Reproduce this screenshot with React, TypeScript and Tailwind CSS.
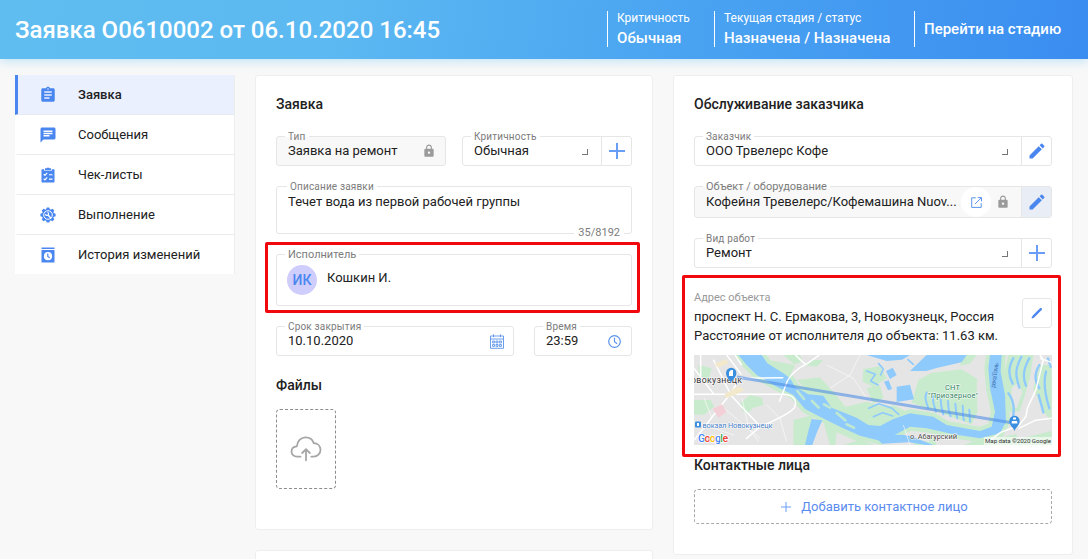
import type { ReactNode } from "react";
import { MdAssignment, MdChat, MdEdit, MdLock } from "react-icons/md";

const ChecklistIcon = () => (
  <svg width="16" height="16" viewBox="0 0 16 16" fill="none">
    <path fill="#4a86f0" d="M2 2.2h2.2v1.6h7.6V2.2H14c.3 0 .5.2.5.5v12.1c0 .4-.3.7-.7.7H2.200c-.4 0-.7-.3-.7-.7V2.700c0-.3.200-.5.5-.5z" />
    <path fill="#4a86f0" d="M5 1.200h1.800a1.300 1.300 0 0 1 2.400 0H11v2H5z" />
    <path stroke="#fff" strokeWidth="1.100" d="M3.700 7.200l1.200 1.200 2.300-2.500M3.700 11.700l1.200 1.200 2.300-2.500M9 7.700h3.500M9 12.100h3.500" />
  </svg>
);

const GearIcon = () => (
  <svg width="16" height="16" viewBox="0 0 16 16" fill="none">
    <g fill="#4a86f0">
      <circle cx="8" cy="8" r="6" />
      <path d="M6.700.4h2.600l.9 3H5.800zM6.700 15.600h2.600l.9-3H5.800zM.4 6.700v2.600l3 .9V5.800zM15.600 6.700v2.600l-3 .9V5.800z" />
      <path d="M6.700.4h2.600l.9 3H5.800zM6.700 15.600h2.600l.9-3H5.800zM.4 6.700v2.600l3 .9V5.800zM15.600 6.700v2.600l-3 .9V5.800z" transform="rotate(45 8 8)" />
    </g>
    <circle cx="8" cy="8" r="4.300" stroke="#fff" strokeWidth="1" />
    <path stroke="#fff" strokeWidth="1.500" d="M7.800 7.800l3.400 3.600" />
    <path stroke="#fff" strokeWidth="1.100" d="M5.300 7.200c.5 1.300 2 1.600 2.800.8.800-.8.500-2.200-.6-2.700" />
  </svg>
);

const HistoryIcon = () => (
  <svg width="16" height="16" viewBox="0 0 16 16" fill="none">
    <path fill="#4a86f0" d="M1.500.5h13v1.600h-13zM1.500 2.900h13v12c0 .400-.300.700-.700.700H2.200a.700.700 0 0 1-.700-.700z" />
    <circle cx="8" cy="9.200" r="4.100" fill="#fff" />
    <path stroke="#4a86f0" strokeWidth="1.200" d="M7.800 6.500v3l1.900 1.300" />
  </svg>
);

const PlusIcon = ({ size = 16, weight = 2 }: { size?: number; weight?: number }) => (
  <svg width={size} height={size} viewBox="0 0 16 16" stroke="#6a9df6" strokeWidth={weight}>
    <path d="M8 0v16M0 8h16" />
  </svg>
);

const Corner = () => (
  <span className="mt-0.5 block h-[6px] w-[6px] border-r-[1.500px] border-b-[1.500px] border-[#757575]" />
);

const CalendarIcon = () => (
  <svg width="14" height="15" viewBox="0 0 14 15" fill="none" stroke="#5b94ea" strokeWidth=".9">
    <path d="M.5 2h13v12.300H.5zM.5 5h13M3.500.3v2.900M10.500.3v2.900" />
    <path d="M2.600 7h2v1.900h-2zM6 7h2v1.900H6zM9.400 7h2v1.900h-2zM2.600 10.500h2v1.900h-2zM6 10.500h2v1.900H6zM9.400 10.500h2v1.900h-2z" />
  </svg>
);

const ClockIcon = () => (
  <svg width="13" height="13" viewBox="0 0 13 13" fill="none" stroke="#5b94ea" strokeWidth="1.200">
    <circle cx="6.500" cy="6.500" r="5.800" />
    <path d="M6.500 2.800v3.900l2.600 2" />
  </svg>
);

const OpenIcon = () => (
  <svg width="11" height="11" viewBox="0 0 11 11" fill="none" stroke="#5b94ea" strokeWidth="1">
    <path d="M4.800.8H.7v9.600h9.500V6.200M6.700.6h3.800v3.800M10.300.8L4 7" />
  </svg>
);

const PencilStroke = () => (
  <svg width="12" height="12" viewBox="0 0 12 12" fill="none" stroke="#4a86f0" strokeLinecap="round">
    <path strokeWidth="2.400" d="M2.600 9.300L8.300 3.700" />
    <path strokeWidth="2.400" d="M9.300 2.700l.5-.5" />
    <path strokeWidth="1.400" d="M1.300 10.700l1.200-.8" />
  </svg>
);

const CloudIcon = () => (
  <svg width="32" height="26" viewBox="0 0 32 26" fill="none" stroke="#a6a6a6" strokeWidth="1.800" strokeLinecap="round" strokeLinejoin="round">
    <path d="M10.500 20.700H7C3.800 20.700 1.500 18.300 1.500 15.500c0-2.600 2-4.900 5.400-5.200C7.100 5 11 1.400 15.600 1.400c4 0 7 2.300 8 5.600 4 .2 6.900 3 6.900 6.700 0 4-3 7-7 7h-2.200" />
    <path d="M16 24.300V13.500M12.200 17l3.800-3.800 3.800 3.800" />
  </svg>
);

const menu: { label: string; icon: ReactNode }[] = [
  { label: "Заявка", icon: <MdAssignment size={18} color="#4a86f0" /> },
  { label: "Сообщения", icon: <MdChat size={18} color="#4a86f0" /> },
  { label: "Чек-листы", icon: <ChecklistIcon /> },
  { label: "Выполнение", icon: <GearIcon /> },
  { label: "История изменений", icon: <HistoryIcon /> },
];

function Field({
  label,
  labelClass = "left-[8px] text-[10px] tracking-[0.18px]",
  className = "",
  children,
}: {
  label: string;
  labelClass?: string;
  className?: string;
  children: ReactNode;
}) {
  return (
    <div className={`relative flex rounded-[3px] border border-[#e6e6e6] ${className}`}>
      <span
        className={`absolute -top-[7px] bg-[linear-gradient(#fff_55%,transparent_55%)] px-[3px] leading-[13px] whitespace-nowrap text-[#7c7c7c] ${labelClass}`}
      >
        {label}
      </span>
      {children}
    </div>
  );
}

function SideButton({ children, className = "" }: { children: ReactNode; className?: string }) {
  return (
    <div className={`flex w-[30px] shrink-0 items-center justify-center border-l border-[#e6e6e6] ${className}`}>
      {children}
    </div>
  );
}

const RIVER =
  "M175 30H245L262 55 310 85 330 100 345 125 385 148 430 152 455 188 530 218 565 240 600 243 640 222 690 205 760 215 800 240 900 258 935 245 945 200 930 130 925 70 930 30H965L962 80 975 150 978 230 960 265 900 280 820 268 740 250 690 245 640 272 600 287 540 272 480 245 420 215 375 192 340 150 290 125 230 90 200 60Z";

const Terrain = () => (
  <g transform="scale(.33333) translate(-42 -30)">
    <g fill="#c9ebcd">
      <path d={RIVER} stroke="#c9ebcd" strokeWidth="24" strokeLinejoin="round" />
      <path d="M265 45l80 15-14 32-34 0zM310 30h50l8 20-26 8zM350 105l70-8 50 55 30 38-50 10zM42 165l50 0 10 20-30 24-30 0zM55 60l40 10-8 30-32-6zM180 175l30-25 36 8 4 22-30 8-20 20-14-14z" />
      <path d="M550 72l50-8 20 36-40 26-32-16zM560 130l40-10 10 40-30 16zM480 190l80-20 70 20-20 40-60 0z" />
      <path d="M715 105l40-22 90-10 46 28 10 82-26 55-110-40-70-25zM580 200l60-20 60 30-60 20z" />
      <path d="M985 30h75l-10 70-30 98-30 4-26-80zM1080 60h35v170l-25-30-30-70z" />
      <path d="M340 225l60-15-10 90-50 0zM430 230l60 30 90 40H450zM720 275l180 15 215-45v55H700zM850 30l40 0-20 26-30 6zM370 60l30-15 30 0-20 20z" />
    </g>
    <path fill="#e6e5e5" d="M890 110l22 30 6 60-16 32-10-40zM995 130l20-18 12 30-16 46-16 0zM760 275l120 14-30 11h-80zM700 262l40 8 10 22-40-8zM470 262l60 26-40 12h-24zM1000 250l60-30 55 20v18l-100 24z" />
    <g fill="#8fcafd">
      <path d={RIVER} />
      <path d="M395 222l32 4-16 36-14 38h-22l10-42zM650 125l40-6 12 44-52 8zM690 78l50-48h120l-15 22-72 16-34 10zM560 30h130l-24 14-46 4zM618 78l20-10 12 22-20 12zM612 110l14-4 10 26-12 4z" />
      <path d="M590 280c50-14 90-16 130 4l40 16h-22l-52-8-80 4z" />
    </g>
    <g fill="none" stroke="#8fcafd" strokeWidth="7" strokeLinecap="round" strokeLinejoin="round">
      <path d="M745 190c-8-25-12-30-5-48M768 200c-6-20-12-30-8-46M790 208c-8-24-8-30-8-46M812 214c-10-24-6-30-8-46M832 220c-6-20-4-34-6-44M852 226c-6-20-2-34-4-44M870 230l-2-36" strokeWidth="6" />
      <path d="M1000 40c-16 26-16 50-2 76M1024 36c-22 40-16 60-6 92M1048 40c-18 30-22 54-10 82M1078 60c-18 30-12 50 0 70M1098 80c-8 30-6 60 10 110M1076 150l14 52M985 145c16 20 20 40 14 72M1104 40l8 26" />
      <path d="M560 78l26 10-14 20 22 12M596 56l14 16-8 18M566 190l30-14 40 14 20 18M580 215l28-12 30 10M546 250l-8-14M700 58l-16-14" strokeWidth="5" />
    </g>
    <path d="M470 204l26 22M396 168l20 20M432 178l18 10M500 238l22 10M352 138l20 24" stroke="#bfe8d2" strokeWidth="8" strokeLinecap="round" />
    <g fill="none" stroke="#fff" strokeWidth="4.500" strokeLinejoin="round">
      <path d="M42 148H312c30 2 42 20 30 42-24 26-74 40-108 60l-36 32M150 148l90 96M42 286l108-138M150 148L180 100 310 98M140 30l44 58M100 44l50 100M312 134l10-26c12-22 30-38 60-52l36-26M376 58l-30-28M42 70l60 78M62 30v80M165 30l20 30M312 134l-14 36" />
      <path d="M72 160l24 60M186 160l20 90 30 40M120 180l120 100M42 230l120 40M260 180l40 40 20 70M440 60l80 40 40 60M540 30l-30 60-60 40M690 300l-20-60" strokeWidth="2" opacity=".85" />
      <path d="M1080 30l10 14-22 90-26 56-4 24-22 28-54 20-40 30M1080 40l34 12M1016 250l50-24 50-6" />
    </g>
    <path fill="#f2e9cc" d="M104 56l34-14 8 12-32 14zM134 148l40-24 20 10-24 14-34 12z" />
    <path fill="#f3d0d8" d="M98 192l28-14 14 22-24 18z" />
  </g>
);

const RouteMap = () => (
  <svg className="block" width="358" height="90" viewBox="0 0 358 90" fontFamily="Roboto, sans-serif">
    <rect width="358" height="90" fill="#e6e5e5" />
    <Terrain />
    <path d="M43 22L319 68" stroke="#4e8ee6" strokeOpacity=".6" strokeWidth="3" />
    <g stroke="#fff" strokeWidth="1.200" strokeOpacity=".8" paintOrder="stroke">
      <text x="-3" y="28" fontSize="8.800" fill="#333" textLength="51">овокузнецк</text>
      <text x="8.500" y="72.500" fontSize="7.500" fill="#4480c8" textLength="70">вокзал Новокузнецк</text>
      <text x="251" y="34.500" fontSize="7.500" fill="#2f8062" textLength="15">СНТ</text>
      <text x="234" y="43" fontSize="7.500" fill="#2f8062" textLength="50">"Приозерное"</text>
      <text x="216" y="84" fontSize="7.500" fill="#444" textLength="47">о. Абагурский</text>
    </g>
    <g fill="#3b8fe0">
      <path d="M37 28c-1-4-5-5-5-10a5.200 5.200 0 0 1 10.400 0c0 5-4.400 6-5.400 10z" />
      <path d="M320.500 76c-1-4-5.200-5-5.200-10a5.200 5.200 0 0 1 10.400 0C325.700 71 321.500 72 320.500 76z" />
      <rect x="1" y="66.500" width="6" height="6" rx="1" />
    </g>
    <path fill="#fff" d="M35 17l2-2h2v6h-4zM319 62.500h3v2h-3zM318 66h5l.5 2.500h-6zM3 68h2v3H3z" />
    <text x="301" y="33" fontSize="6.500" fill="#3f78b5" textLength="25" transform="rotate(-82 301 33)">река Томь</text>
    <rect x="290" y="82" width="68" height="8" fill="#fff" fillOpacity=".6" />
    <text x="291" y="88" fontSize="6.200" fill="#333" textLength="66">Map data ©2020 Google</text>
    <text x="4" y="86.500" fontSize="10.500" fontWeight="500" stroke="#fff" strokeWidth="1.500" paintOrder="stroke" textLength="30">
      <tspan fill="#4285f4">G</tspan>
      <tspan fill="#ea4335">o</tspan>
      <tspan fill="#fbbc05">o</tspan>
      <tspan fill="#4285f4">g</tspan>
      <tspan fill="#34a853">l</tspan>
      <tspan fill="#ea4335">e</tspan>
    </text>
  </svg>
);

export default function App() {
  return (
    <div className="h-[559px] w-[1088px] overflow-hidden bg-[#f8f8f8] font-[Roboto,sans-serif] text-[13px] text-[#212121]">
      <header className="flex h-[59px] items-center bg-[linear-gradient(100deg,#60bdf0_0%,#5cb9f1_30%,#4ba5f1_60%,#3a8df0_100%)] pl-[15px] text-white shadow-[0_2px_10px_rgba(80,185,245,0.35)]">
        <h1 className="w-[592px] text-[24px] leading-[28px] font-medium">Заявка О0610002 от 06.10.2020 16:45</h1>
        <div className="-mt-px h-9 w-[107px] border-l border-white pl-[9px]">
          <div className="text-[12px] leading-[14px]">Критичность</div>
          <div className="mt-[4px] text-[15px] leading-[18px] font-medium tracking-[0.05px]">Обычная</div>
        </div>
        <div className="-mt-px h-9 w-[200px] border-l border-white pl-[9px]">
          <div className="text-[12px] leading-[14px]">Текущая стадия / статус</div>
          <div className="mt-[4px] text-[15px] leading-[18px] font-medium tracking-[0.05px]">Назначена / Назначена</div>
        </div>
        <div className="-mt-px flex h-9 items-center border-l border-white pl-[9px] text-[15px] font-medium">Перейти на стадию</div>
      </header>

      <div className="flex items-start pt-4 pl-[15px]">
        <nav className="w-[220px] border-r border-[#ededed] bg-white">
          {menu.map((item, i) => (
            <div
              key={item.label}
              className={
                i === 0
                  ? "flex h-10 items-center border-b border-l-3 border-b-[#e6e9f2] border-l-[#4a86f0] bg-[#ebf0ff] font-medium"
                  : "flex h-10 items-center border-b border-l-3 border-b-[#ececec] border-l-white last:h-[39px] last:border-b-0"
              }
            >
              <span className="ml-[20px] flex w-5 justify-center">{item.icon}</span>
              <span className="ml-[20px]">{item.label}</span>
            </div>
          ))}
        </nav>

        <div className="ml-5 flex w-[398px] flex-col gap-5">
          <section className="h-[455px] rounded-[3px] border border-[#eeeeee] bg-white px-5">
            <h2 className="pt-5 text-sm leading-4 font-medium">Заявка</h2>

            <div className="mt-6 flex gap-4">
              <Field label="Тип" className="h-[30px] w-[170px] items-center bg-[#f8f8f8] pl-[11px]">
                <span className="grow">Заявка на ремонт</span>
                <MdLock size={14} color="#9b9b9b" className="mr-[9px]" />
              </Field>
              <Field label="Критичность" className="h-[30px] w-[170px]">
                <span className="flex grow items-center pl-[11px]">Обычная</span>
                <span className="flex items-center pr-[13px]"><Corner /></span>
                <SideButton><PlusIcon /></SideButton>
              </Field>
            </div>

            <Field label="Описание заявки" labelClass="left-[10px] text-[10px] tracking-[0.17px]" className="mt-5 h-12 w-[356px] pt-[7px] pl-[11px]">
              <span className="leading-4">Течет вода из первой рабочей группы</span>
              <span className="absolute right-[7px] -bottom-[7px] bg-white px-1 text-[11px] leading-[14px] text-[#7c7c7c]">35/8192</span>
            </Field>

            <div className="relative">
              <div className="pointer-events-none absolute -top-[12px] -left-[11px] z-10 h-[71px] w-[375px] rounded-[2px] border-3 border-[#f0080c]" />
              <Field label="Исполнитель" labelClass="left-[8px] text-[11px]" className="mt-5 h-[52px] w-[356px] pt-[10px] pl-[10px]">
                <span className="flex size-[30px] items-center justify-center rounded-full bg-[#cecdfb] text-[14px] font-medium text-[#4a86f0]">ИК</span>
                <span className="ml-[10px] pt-[5px] leading-4">Кошкин И.</span>
              </Field>
            </div>

            <div className="mt-5 flex gap-5">
              <Field label="Срок закрытия" className="h-[30px] w-[238px] items-center pl-[11px]">
                <span className="grow">10.10.2020</span>
                <span className="mr-[9px]"><CalendarIcon /></span>
              </Field>
              <Field label="Время" className="h-[30px] w-[98px] items-center pl-[11px]">
                <span className="grow">23:59</span>
                <span className="mr-[10px]"><ClockIcon /></span>
              </Field>
            </div>

            <h2 className="mt-[21px] text-sm leading-4 font-medium">Файлы</h2>
            <div className="mt-4 flex h-20 w-[60px] items-center justify-center rounded-[4px] border border-dashed border-[#8c8c8c]">
              <CloudIcon />
            </div>
          </section>
          <section className="h-10 rounded-[3px] border border-[#eeeeee] bg-white" />
        </div>

        <section className="ml-5 h-[480px] w-[400px] rounded-[3px] border border-[#eeeeee] bg-white px-5">
          <h2 className="pt-5 text-sm leading-4 font-medium">Обслуживание заказчика</h2>

          <Field label="Заказчик" className="mt-6 h-[30px] w-[358px]">
            <span className="flex grow items-center pl-[11px]">ООО Трвелерс Кофе</span>
            <span className="flex items-center pr-[13px]"><Corner /></span>
            <SideButton><MdEdit size={20} color="#4a86f0" /></SideButton>
          </Field>

          <Field label="Объект / оборудование" labelClass="left-[8px] text-[11px]" className="mt-5 h-8 w-[358px] bg-[#f8f8f8]">
            <span className="flex min-w-0 grow items-center pl-[11px] whitespace-nowrap">Кофейня Тревелерс/Кофемашина Nuov...</span>
            <span className="mr-[5px] flex size-[30px] shrink-0 items-center justify-center rounded-full bg-white"><OpenIcon /></span>
            <span className="mr-[11px] flex shrink-0 items-center"><MdLock size={14} color="#9b9b9b" /></span>
            <SideButton className="bg-[#e9edf5]"><MdEdit size={20} color="#4a86f0" /></SideButton>
          </Field>

          <Field label="Вид работ" className="mt-5 h-[30px] w-[358px]">
            <span className="flex grow items-center pl-[11px]">Ремонт</span>
            <span className="flex items-center pr-[13px]"><Corner /></span>
            <SideButton><PlusIcon /></SideButton>
          </Field>

          <div className="relative pt-[23px]">
            <div className="pointer-events-none absolute top-[7px] -left-[12px] z-10 h-[182px] w-[379px] rounded-[2px] border-3 border-[#f0080c]" />
            <div className="flex h-[64px] w-[358px] justify-between">
              <div>
                <div className="text-[11px] leading-[14px] text-[#999]">Адрес объекта</div>
                <div className="mt-[2px] leading-[19px] whitespace-nowrap">
                  проспект Н. С. Ермакова, 3, Новокузнецк, Россия
                  <br />
                  Расстояние от исполнителя до объекта: 11.63 км.
                </div>
              </div>
              <div className="mt-[7px] flex size-[30px] shrink-0 items-center justify-center rounded-[3px] border border-[#e6e6e6]">
                <PencilStroke />
              </div>
            </div>
            <RouteMap />
          </div>

          <h2 className="mt-3 text-sm leading-4 font-medium">Контактные лица</h2>
          <div className="mt-4 flex h-[35px] w-[358px] items-center justify-center gap-[10px] rounded-[4px] border border-dashed border-[#a8a8a8] pl-[3px] text-[#5a8bee]">
            <PlusIcon size={10} weight={1.6} />
            Добавить контактное лицо
          </div>
        </section>
      </div>
    </div>
  );
}
